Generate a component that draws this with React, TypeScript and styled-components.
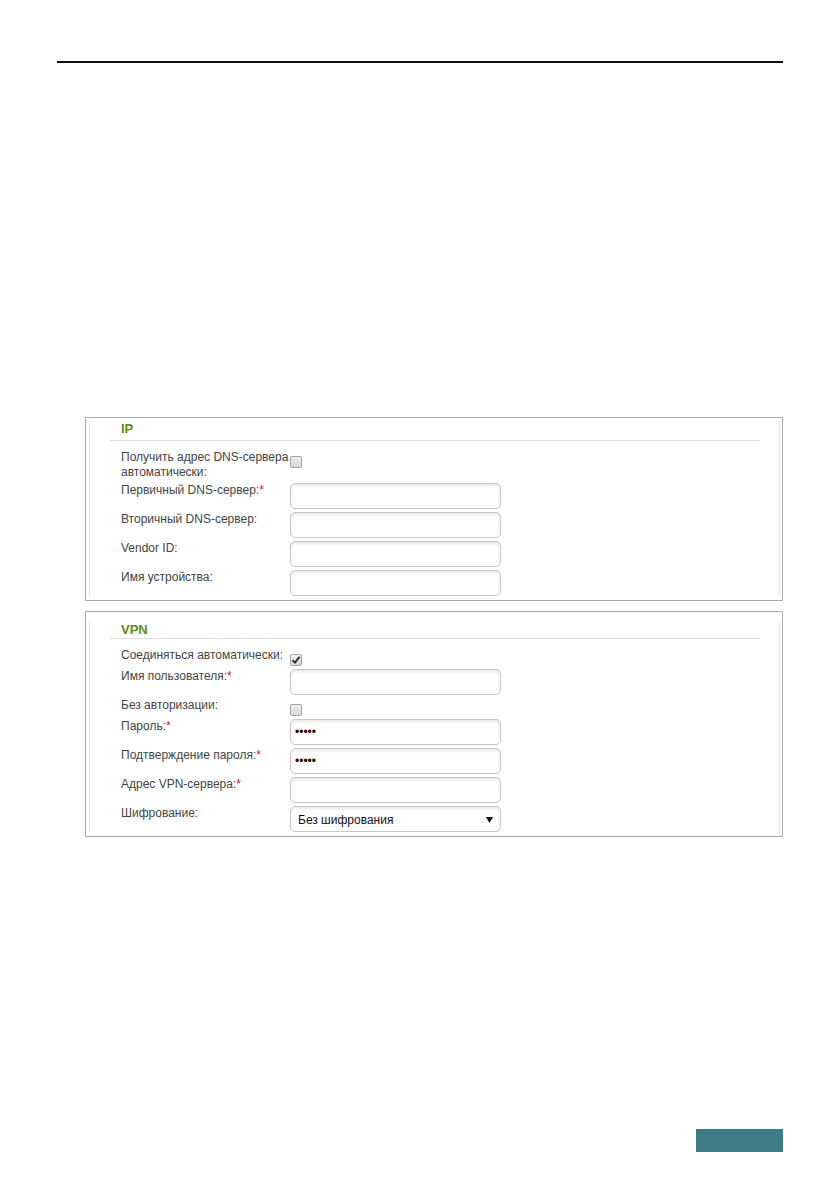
import React from "react";
import styled, { createGlobalStyle } from "styled-components";

const GlobalStyle = createGlobalStyle`
  html, body {
    margin: 0;
    background: #fff;
    font-family: "Liberation Sans", Arial, sans-serif;
  }
`;

const Page = styled.div`
  width: 840px;
  height: 1190px;
  box-sizing: border-box;
  padding: 61px 57px 38px;
  display: flex;
  flex-direction: column;
`;

const TopRule = styled.div`
  height: 2px;
  background: #111;
`;

const Forms = styled.div`
  margin: 354px 0 0 28px;
  display: flex;
  flex-direction: column;
  gap: 10px;
`;

const Panel = styled.section`
  border: 1px solid #ababab;
  padding: 2px 2px 3px 3px;
`;

const Inner = styled.div`
  border-left: 1px solid #e6e6e6;
  border-right: 1px solid #e6e6e6;
  padding: 0 19px 0 20px;
`;

const Title = styled.h3<{ $top: number }>`
  margin: ${(p) => p.$top}px 0 0;
  padding-left: 11px;
  font-size: 13px;
  line-height: 16px;
  font-weight: bold;
  color: #5f8c12;
`;

const Divider = styled.div<{ $top: number }>`
  height: 1px;
  margin-top: ${(p) => p.$top}px;
  background: #dedede;
`;

const Rows = styled.div`
  display: flex;
  flex-direction: column;
  gap: 3px;
  padding: 9px 0 1px 11px;
`;

const Row = styled.div`
  display: grid;
  grid-template-columns: 169px 211px;
  align-items: start;
`;

const Label = styled.div`
  font-size: 12px;
  line-height: 15px;
  color: #444;
`;

const Req = styled.span`
  color: #d01040;
`;

const TextBox = styled.input`
  width: 211px;
  height: 26px;
  box-sizing: border-box;
  margin: 0;
  padding: 0 4px;
  border: 1px solid #c6c6c6;
  border-radius: 5px;
  background: #fff;
  box-shadow: inset 0 2px 3px rgba(0, 0, 0, 0.09);
  font-family: "Liberation Sans", Arial, sans-serif;
  font-size: 12px;
  color: #300;
  outline: none;
`;

const Check = styled.span<{ $checked?: boolean }>`
  display: flex;
  align-items: center;
  justify-content: center;
  width: 12px;
  height: 12px;
  margin-top: 6px;
  box-sizing: border-box;
  border: 1px solid #a3a3a3;
  border-radius: 2px;
  background: linear-gradient(#f0f0f0, #d9d9d9);
`;

const SelectBox = styled.div`
  width: 211px;
  height: 26px;
  box-sizing: border-box;
  display: flex;
  align-items: center;
  justify-content: space-between;
  padding: 1px 7px 0 7px;
  border: 1px solid #c6c6c6;
  border-radius: 5px;
  box-shadow: inset 0 2px 3px rgba(0, 0, 0, 0.09);
  font-size: 12px;
  color: #111;
`;

const Footer = styled.div`
  margin-top: auto;
  align-self: flex-end;
  width: 87px;
  height: 23px;
  background: #3e7b83;
`;

type Field = {
  label: React.ReactNode;
  req?: boolean;
  kind: "text" | "password" | "check" | "checked" | "select";
};

const ipFields: Field[] = [
  {
    label: (
      <>
        Получить адрес DNS-сервера
        <br />
        автоматически:
      </>
    ),
    kind: "check",
  },
  { label: "Первичный DNS-сервер:", req: true, kind: "text" },
  { label: "Вторичный DNS-сервер:", kind: "text" },
  { label: "Vendor ID:", kind: "text" },
  { label: "Имя устройства:", kind: "text" },
];

const vpnFields: Field[] = [
  { label: "Соединяться автоматически:", kind: "checked" },
  { label: "Имя пользователя:", req: true, kind: "text" },
  { label: "Без авторизации:", kind: "check" },
  { label: "Пароль:", req: true, kind: "password" },
  { label: "Подтверждение пароля:", req: true, kind: "password" },
  { label: "Адрес VPN-сервера:", req: true, kind: "text" },
  { label: "Шифрование:", kind: "select" },
];

const Control = ({ kind }: { kind: Field["kind"] }) => {
  if (kind === "check") return <Check />;
  if (kind === "checked")
    return (
      <Check $checked>
        <svg width="10" height="10" viewBox="0 0 10 10">
          <path d="M1.6 5.2 L4 7.6 L8.6 1.8" fill="none" stroke="#333" strokeWidth="2" />
        </svg>
      </Check>
    );
  if (kind === "select")
    return (
      <SelectBox>
        <span>Без шифрования</span>
        <svg width="7" height="6" viewBox="0 0 7 6">
          <path d="M0 0 H7 L3.5 6 Z" fill="#111" />
        </svg>
      </SelectBox>
    );
  if (kind === "password") return <TextBox type="password" value="12345" readOnly />;
  return <TextBox type="text" value="" readOnly />;
};

const FormPanel = ({ title, top, gap, fields }: { title: string; top: number; gap: number; fields: Field[] }) => (
  <Panel>
    <Inner>
      <Title $top={top}>{title}</Title>
      <Divider $top={gap} />
      <Rows>
        {fields.map((f, i) => (
          <Row key={i}>
            <Label>
              {f.label}
              {f.req && <Req>*</Req>}
            </Label>
            <Control kind={f.kind} />
          </Row>
        ))}
      </Rows>
    </Inner>
  </Panel>
);

export default function App() {
  return (
    <Page>
      <GlobalStyle />
      <TopRule />
      <Forms>
        <FormPanel title="IP" top={1} gap={3} fields={ipFields} />
        <FormPanel title="VPN" top={8} gap={0} fields={vpnFields} />
      </Forms>
      <Footer />
    </Page>
  );
}
